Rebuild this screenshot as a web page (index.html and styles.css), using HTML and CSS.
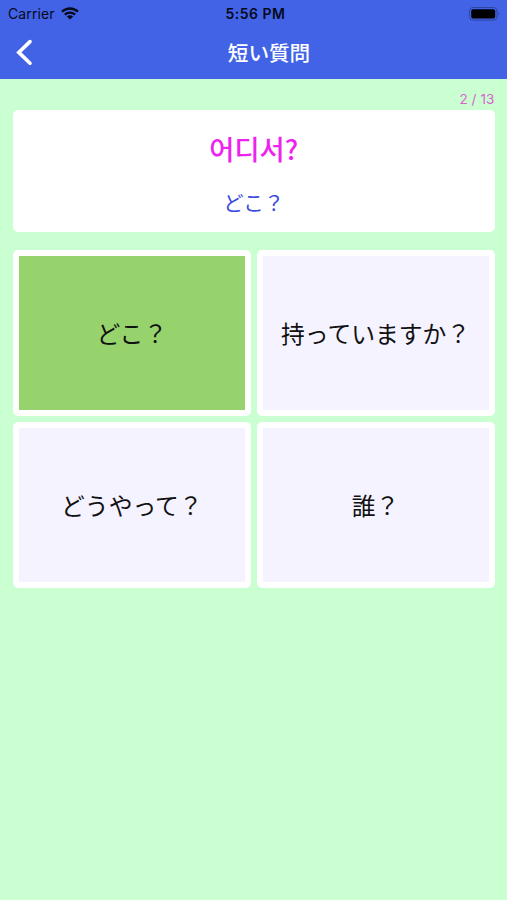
FILE: index.html
```
<!DOCTYPE html>
<html lang="ja">
<head>
    <meta charset="UTF-8">
    <meta name="viewport" content="width=device-width, initial-scale=1.0">
    <title>短い質問</title>
    <link rel="stylesheet" href="styles.css">
</head>
<body>

    <header class="header">
        <div class="status-bar">
            <div class="carrier">
                <span>Carrier</span>
                <svg class="wifi" width="18" height="13" viewBox="0 0 18 13">
                    <path d="M1 4.7C5.6 0.4 12.4 0.4 17 4.7M3.8 7.6C6.8 4.9 11.2 4.9 14.2 7.6" fill="none" stroke="#050a1c" stroke-width="2.3"/>
                    <path d="M5.8 9.4C7.7 7.8 10.3 7.8 12.2 9.4L9 12.6Z" fill="#050a1c"/>
                </svg>
            </div>
            <span class="time">5:56 PM</span>
            <svg class="battery" width="32" height="14" viewBox="0 0 32 14">
                <rect x="0.5" y="0.5" width="27.5" height="12.6" rx="3.5" fill="none" stroke="#2c459e"/>
                <rect x="2.2" y="2.2" width="24" height="9.2" rx="2" fill="#000"/>
                <path d="M29.6 4.8Q31.4 6.8 29.6 8.8Z" fill="#2c459e"/>
            </svg>
        </div>
        <div class="nav-bar">
            <button type="button" class="back" aria-label="戻る">
                <svg width="18" height="28" viewBox="0 0 18 28">
                    <path d="M15 2.6L3.8 13.4L15 24.2" fill="none" stroke="#fff" stroke-width="3.6" stroke-linecap="round"/>
                </svg>
            </button>
            <h1>短い質問</h1>
        </div>
    </header>

    <main class="container">
        <p class="progress">2 / 13</p>

        <div class="question">
            <h2 lang="ko">어디서?</h2>
            <p>どこ？</p>
        </div>

        <div class="answers">
            <button type="button" class="answer correct">どこ？</button>
            <button type="button" class="answer">持っていますか？</button>
            <button type="button" class="answer">どうやって？</button>
            <button type="button" class="answer">誰？</button>
        </div>
    </main>

</body>
</html>
```
FILE: styles.css
```
* {
    box-sizing: border-box;
}

body {
    margin: 0;
    min-height: 900px;
    background-color: #c9ffd1;
    font-family: Inter, "Noto Sans CJK JP", sans-serif;
}

h1, h2, p {
    margin: 0;
}

button {
    font-family: inherit;
    padding: 0;
}

.header {
    height: 79px;
    background-color: #4263e6;
}

.status-bar {
    display: grid;
    grid-template-columns: 1fr auto 1fr;
    align-items: center;
    height: 27px;
    padding: 0 6px 0 8px;
    color: #050a1c;
    font-size: 14px;
}

.carrier {
    display: flex;
    align-items: center;
    gap: 6px;
    letter-spacing: 0.1px;
}

.time {
    margin-left: 2px;
    font-weight: 600;
    letter-spacing: 0.5px;
}

.battery {
    justify-self: end;
}

.nav-bar {
    display: grid;
    grid-template-columns: 48px 1fr 48px;
    align-items: center;
    height: 52px;
}

.back {
    display: flex;
    height: 52px;
    align-items: center;
    padding-left: 15px;
    background: none;
    border: none;
    cursor: pointer;
}

.nav-bar h1 {
    margin-left: 31px;
    padding-bottom: 2px;
    color: #fff;
    font-family: "Noto Sans CJK JP", sans-serif;
    font-size: 20.6px;
    font-weight: 500;
    line-height: 30px;
    text-align: center;
}

.container {
    padding: 11px 12.5px 0 13px;
}

.progress {
    height: 20px;
    color: #dc62cb;
    font-size: 13.5px;
    line-height: 18px;
    letter-spacing: 0.1px;
    text-align: right;
}

.question {
    display: flex;
    flex-direction: column;
    align-items: center;
    height: 122px;
    padding-top: 18px;
    background-color: #fff;
    border-radius: 5px;
}

.question h2 {
    color: #ee22ee;
    font-family: "Noto Sans CJK KR", sans-serif;
    font-size: 27.3px;
    font-weight: 500;
    line-height: 40px;
}

.question p {
    margin-top: 19px;
    color: #3a4be0;
    font-family: "Noto Sans CJK JP", sans-serif;
    font-size: 20.5px;
    line-height: 30px;
}

.answers {
    display: grid;
    grid-template-columns: 1fr 1fr;
    gap: 6px;
    margin-top: 18px;
}

.answer {
    height: 166px;
    padding-bottom: 2px;
    background-color: #f5f3ff;
    border: 6px solid #fff;
    border-radius: 5px;
    color: #111;
    font-size: 23.8px;
    cursor: pointer;
}

.answer.correct {
    background-color: #97d36d;
}
```
